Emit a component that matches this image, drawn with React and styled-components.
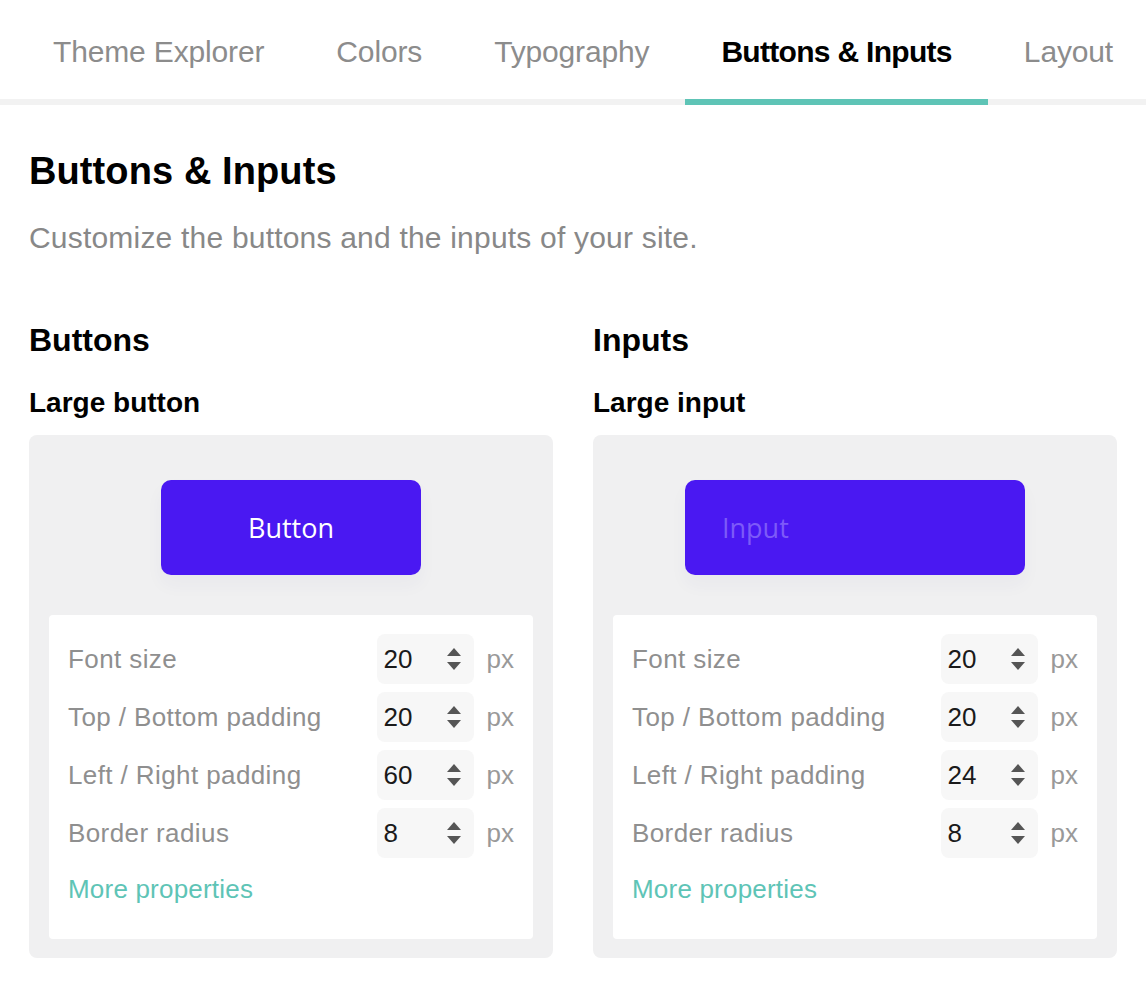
import React from "react";
import styled, { createGlobalStyle } from "styled-components";

const Global = createGlobalStyle`
  html, body { margin: 0; padding: 0; background: #ffffff; }
  body { font-family: "Liberation Sans", Arial, Helvetica, sans-serif; color: #111; }
  * { box-sizing: border-box; }
`;

const Page = styled.div`
  width: 1146px;
  min-height: 990px;
  background: #fff;
`;

const TabBar = styled.nav`
  display: flex;
  padding-left: 17px;
  border-bottom: 6px solid #f2f2f2;
`;

const Tab = styled.div`
  padding: 34px 36px 29px;
  margin-bottom: -6px;
  font-size: 30px;
  line-height: 36px;
  white-space: nowrap;
  color: ${(p) => (p.$active ? "#000" : "#8c8c8c")};
  font-weight: ${(p) => (p.$active ? 700 : 400)};
  letter-spacing: ${(p) => (p.$active ? "-0.7px" : "-0.15px")};
  border-bottom: 6px solid ${(p) => (p.$active ? "#5ec4b6" : "transparent")};
`;

const Content = styled.main`
  padding: 44px 29px 0;
`;

const Title = styled.h1`
  margin: 0;
  font-size: 38px;
  line-height: 44px;
  font-weight: 700;
  letter-spacing: 0.1px;
  color: #000;
`;

const Subtitle = styled.p`
  margin: 27px 0 0;
  font-size: 30px;
  line-height: 36px;
  letter-spacing: 0.2px;
  color: #888;
`;

const Columns = styled.div`
  display: grid;
  grid-template-columns: 1fr 1fr;
  gap: 40px;
  margin-top: 64px;
`;

const Column = styled.section`
  display: flex;
  flex-direction: column;
`;

const SectionTitle = styled.h2`
  margin: 0;
  font-size: 32px;
  line-height: 40px;
  font-weight: 700;
  color: #000;
`;

const SubTitle = styled.h3`
  margin: 26px 0 0;
  font-size: 28px;
  line-height: 34px;
  font-weight: 700;
  color: #000;
`;

const Card = styled.div`
  margin-top: 15px;
  background: #f0f0f1;
  border-radius: 8px;
  padding: 45px 20px 19px;
  display: flex;
  flex-direction: column;
  align-items: center;
`;

const PreviewButton = styled.button`
  width: 260px;
  height: 95px;
  border: none;
  border-radius: 10px;
  background: #4a18f2;
  color: #fff;
  font-family: "Open Sans", "Noto Sans", sans-serif;
  font-size: 27px;
  box-shadow: 0 10px 18px rgba(60, 40, 120, 0.04);
`;

const PreviewInput = styled.input`
  width: 340px;
  height: 95px;
  border: none;
  border-radius: 10px;
  background: #4a18f2;
  padding: 0 0 0 37px;
  font-family: "Open Sans", "Noto Sans", sans-serif;
  font-size: 27px;
  outline: none;
  color: #fff;
  box-shadow: 0 10px 18px rgba(60, 40, 120, 0.04);
  &::placeholder { color: #7d5af8; }
`;

const Panel = styled.div`
  align-self: stretch;
  margin-top: 40px;
  background: #fff;
  border-radius: 4px;
  padding: 19px 19px 35px 19px;
  display: flex;
  flex-direction: column;
  gap: 8px;
`;

const Row = styled.div`
  display: grid;
  grid-template-columns: 1fr 97px auto;
  align-items: center;
  height: 50px;
`;

const Label = styled.span`
  font-size: 26px;
  letter-spacing: 0.4px;
  color: #8f8f8f;
  white-space: nowrap;
`;

const NumberBox = styled.div`
  height: 50px;
  background: #f7f7f7;
  border-radius: 8px;
  display: flex;
  align-items: center;
  justify-content: space-between;
  padding: 0 13px 0 7px;
`;

const NumberValue = styled.span`
  font-size: 26px;
  color: #1a1a1a;
`;

const Unit = styled.span`
  margin-left: 13px;
  font-size: 26px;
  color: #999;
`;

const MoreLink = styled.a`
  margin-top: 8px;
  font-size: 26px;
  line-height: 30px;
  letter-spacing: 0.2px;
  color: #5ec4b6;
  text-decoration: none;
`;

const Spinner = () => (
  <svg width="14" height="22" viewBox="0 0 14 22" aria-hidden="true">
    <path d="M7 0 L14 8 L0 8 Z" fill="#555" />
    <path d="M0 14 L14 14 L7 22 Z" fill="#555" />
  </svg>
);

const Field = ({ label, value }) => (
  <Row>
    <Label>{label}</Label>
    <NumberBox>
      <NumberValue>{value}</NumberValue>
      <Spinner />
    </NumberBox>
    <Unit>px</Unit>
  </Row>
);

const tabs = ["Theme Explorer", "Colors", "Typography", "Buttons & Inputs", "Layout"];

const Properties = ({ values }) => (
  <Panel>
    <Field label="Font size" value={values[0]} />
    <Field label="Top / Bottom padding" value={values[1]} />
    <Field label="Left / Right padding" value={values[2]} />
    <Field label="Border radius" value={values[3]} />
    <MoreLink href="#">More properties</MoreLink>
  </Panel>
);

export default function App() {
  return (
    <Page>
      <Global />
      <TabBar>
        {tabs.map((t) => (
          <Tab key={t} $active={t === "Buttons & Inputs"}>{t}</Tab>
        ))}
      </TabBar>
      <Content>
        <Title>Buttons &amp; Inputs</Title>
        <Subtitle>Customize the buttons and the inputs of your site.</Subtitle>
        <Columns>
          <Column>
            <SectionTitle>Buttons</SectionTitle>
            <SubTitle>Large button</SubTitle>
            <Card>
              <PreviewButton>Button</PreviewButton>
              <Properties values={["20", "20", "60", "8"]} />
            </Card>
          </Column>
          <Column>
            <SectionTitle>Inputs</SectionTitle>
            <SubTitle>Large input</SubTitle>
            <Card>
              <PreviewInput placeholder="Input" readOnly />
              <Properties values={["20", "20", "24", "8"]} />
            </Card>
          </Column>
        </Columns>
      </Content>
    </Page>
  );
}
